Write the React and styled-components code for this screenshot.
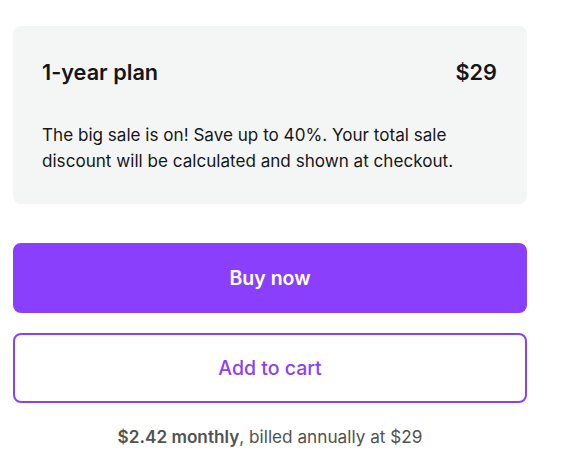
import React from "react"
import styled, { createGlobalStyle } from "styled-components"

const GlobalStyle = createGlobalStyle`
  body {
    margin: 0;
    background: #ffffff;
    font-family: Inter, "Noto Sans", sans-serif;
    -webkit-font-smoothing: antialiased;
  }
`

const Page = styled.div`
  width: 514px;
  padding: 26px 0 0 13px;
  display: flex;
  flex-direction: column;
`

const Card = styled.div`
  background: #f4f6f6;
  border-radius: 8px;
  padding: 30px 30px 30px 29px;
`

const Header = styled.div`
  display: flex;
  justify-content: space-between;
  align-items: center;
  font-size: 21.7px;
  line-height: 32px;
  font-weight: 600;
  color: #161616;
`

const Text = styled.p`
  margin: 34px 0 0;
  font-size: 17.1px;
  line-height: 26px;
  color: #161616;
`

const Button = styled.button`
  box-sizing: border-box;
  width: 100%;
  height: 70px;
  margin-top: ${p => p.$top}px;
  border-radius: 8px;
  font-family: inherit;
  font-size: 19.5px;
  font-weight: ${p => (p.$outline ? 500 : 600)};
  border: 2px solid #8a3ffc;
  background: ${p => (p.$outline ? "#ffffff" : "#8a3ffc")};
  color: ${p => (p.$outline ? "#8a3ffc" : "#ffffff")};
  cursor: pointer;
`

const Note = styled.p`
  margin: 22px 0 0;
  text-align: center;
  font-size: 17.2px;
  line-height: 24px;
  color: #525252;

  b {
    font-weight: 600;
  }
`

export default function App() {
  return (
    <>
      <GlobalStyle />
      <Page>
        <Card>
          <Header>
            <span>1-year plan</span>
            <span>$29</span>
          </Header>
          <Text>
            The big sale is on! Save up to 40%. Your total sale discount will be
            calculated and shown at checkout.
          </Text>
        </Card>
        <Button $top={39}>Buy now</Button>
        <Button $top={20} $outline>
          Add to cart
        </Button>
        <Note>
          <b>$2.42 monthly</b>, billed annually at $29
        </Note>
      </Page>
    </>
  )
}
